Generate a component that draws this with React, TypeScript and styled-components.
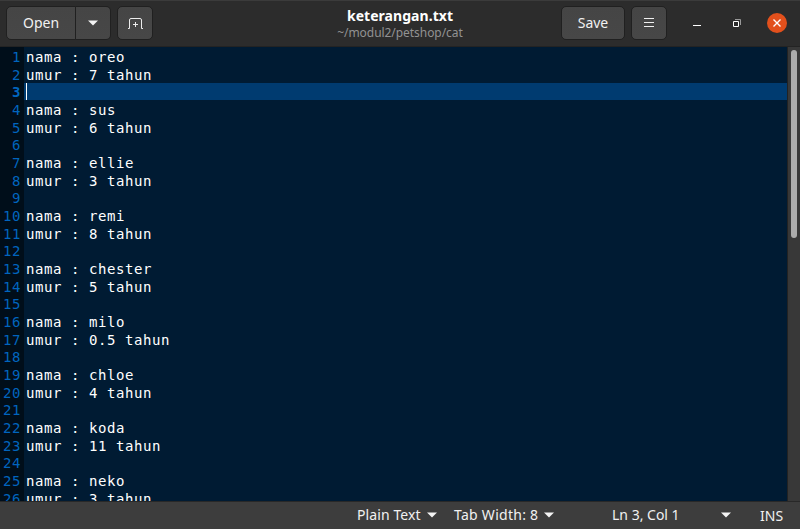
import React from 'react';
import styled, { createGlobalStyle } from 'styled-components';

const GlobalStyle = createGlobalStyle`
  * { box-sizing: border-box; }
  body { margin: 0; background: #2c2c2c; overflow: hidden; }
`;

const Window = styled.div`
  width: 800px;
  height: 529px;
  display: flex;
  flex-direction: column;
  overflow: hidden;
  font-family: 'Noto Sans', sans-serif;
  font-size: 14px;
  color: #f1f1f1;
`;

const HeaderBar = styled.header`
  height: 47px;
  flex: none;
  display: grid;
  grid-template-columns: 1fr 200px 1fr;
  background: #2c2c2c;
  border-top: 1px solid #3b3b3b;
  border-bottom: 1px solid #232323;
`;

const StartTools = styled.div`
  display: flex;
  gap: 6px;
  padding: 5px 0 0 6px;
`;

const EndTools = styled.div`
  display: flex;
  justify-content: flex-end;
  padding: 5px 13px 0 0;
`;

const ButtonGroup = styled.div`
  display: flex;
`;

const Button = styled.button<{ $width: number; $side?: 'left' | 'right'; $gap?: number }>`
  width: ${p => p.$width}px;
  height: 34px;
  margin: 0 0 0 ${p => p.$gap ?? 0}px;
  padding: 0;
  display: flex;
  align-items: center;
  justify-content: center;
  font: inherit;
  color: inherit;
  background: linear-gradient(#454545, #474747);
  border: 1px solid #202020;
  border-left-width: ${p => (p.$side === 'right' ? 0 : 1)}px;
  border-radius: ${p => (p.$side === 'left' ? '5px 0 0 5px' : p.$side === 'right' ? '0 5px 5px 0' : '5px')};
`;

const Label = styled.span<{ $spacing?: number; $indent?: number }>`
  margin-left: ${p => p.$indent ?? 0}px;
  letter-spacing: ${p => p.$spacing ?? 0}px;
  line-height: 20px;
  white-space: nowrap;
`;

const TitleBlock = styled.div`
  display: flex;
  flex-direction: column;
  align-items: center;
  padding-top: 5px;
`;

const Title = styled.span`
  font-size: 14px;
  font-weight: 700;
  line-height: 20px;
  letter-spacing: 0.05px;
  color: #fff;
`;

const Subtitle = styled.span`
  font-size: 12px;
  line-height: 13px;
  letter-spacing: -0.05px;
  color: #929292;
`;

const WindowControl = styled.button<{ $gap: number; $close?: boolean }>`
  width: 20px;
  height: 20px;
  margin: 7px 0 0 ${p => p.$gap}px;
  padding: 0;
  border: 0;
  border-radius: 50%;
  background: ${p => (p.$close ? '#e2501c' : 'transparent')};
  display: flex;
`;

const Editor = styled.main`
  height: 454px;
  flex: none;
  display: flex;
  overflow: hidden;
  background: #001b33;
`;

const Lines = styled.div`
  width: 787px;
  display: flex;
  flex-direction: column;
  font: 14px 'DejaVu Sans Mono', monospace;
  letter-spacing: 0.572px;
`;

const Line = styled.div<{ $short: boolean }>`
  height: ${p => (p.$short ? 17 : 18)}px;
  flex: none;
  display: flex;
  line-height: ${p => (p.$short ? 18 : 20)}px;
`;

const LineNumber = styled.span<{ $current: boolean }>`
  width: 24px;
  padding-right: 3px;
  text-align: right;
  background: #000e1a;
  color: #0065bf;
  font-weight: ${p => (p.$current ? 700 : 400)};
`;

const LineText = styled.span<{ $current: boolean }>`
  flex: 1;
  display: flex;
  padding-left: 2px;
  white-space: pre;
  color: #fff;
  background: ${p => (p.$current ? '#003b70' : '#001b33')};
`;

const Caret = styled.span`
  width: 1px;
  height: 17px;
  background: #fff;
`;

const ScrollTrack = styled.div`
  width: 13px;
  background: #383838;
  border-left: 1px solid #232323;
  padding: 3px 0 0 3px;
`;

const ScrollThumb = styled.div`
  width: 6px;
  height: 188px;
  border-radius: 3px;
  background: #acacac;
`;

const StatusBar = styled.footer`
  height: 28px;
  flex: none;
  display: flex;
  background: #3d3d3d;
  border-top: 1px solid #282828;
  padding: 3px 0 0 357px;
`;

const StatusItem = styled.div<{ $width: number; $spread?: boolean; $drop?: number }>`
  width: ${p => p.$width}px;
  height: 20px;
  margin-top: ${p => p.$drop ?? 0}px;
  display: flex;
  align-items: center;
  justify-content: ${p => (p.$spread ? 'space-between' : 'flex-start')};
  gap: 6px;
`;

const ArrowShape = styled.svg`
  flex: none;
`;

const Arrow = () => (
  <ArrowShape width="10" height="6" viewBox="0 0 10 6">
    <path d="M0 .5h10L5 5.5z" fill="#f4f4f4" />
  </ArrowShape>
);

const NewTabIcon = () => (
  <svg width="16" height="16" viewBox="0 0 16 16" fill="none" stroke="#ededed">
    <path d="M1 13.5H2.5V5Q2.5 3.5 4 3.5H13Q14.5 3.5 14.5 5V13.5H16M8.5 7V12M6 9.5H11" />
  </svg>
);

const MenuIcon = () => (
  <svg width="10" height="10" viewBox="0 0 10 10">
    <path d="M0 .5H10M0 4.5H10M0 8.5H10" stroke="#f0f0f0" />
  </svg>
);

const pets: [string, string][] = [
  ['oreo', '7'], ['sus', '6'], ['ellie', '3'], ['remi', '8'], ['chester', '5'],
  ['milo', '0.5'], ['chloe', '4'], ['koda', '11'], ['neko', '3'],
];
const lines = pets.flatMap(([name, age]) => [`nama : ${name}`, `umur : ${age} tahun`, '']).slice(0, 26);
const currentLine = 3;

export default function App() {
  return (
    <Window>
      <GlobalStyle />
      <HeaderBar>
        <StartTools>
          <ButtonGroup>
            <Button $width={70} $side="left"><Label>Open</Label></Button>
            <Button $width={35} $side="right"><Arrow /></Button>
          </ButtonGroup>
          <Button $width={36}><NewTabIcon /></Button>
        </StartTools>
        <TitleBlock>
          <Title>keterangan.txt</Title>
          <Subtitle>~/modul2/petshop/cat</Subtitle>
        </TitleBlock>
        <EndTools>
          <Button $width={64}><Label>Save</Label></Button>
          <Button $width={36} $gap={6}><MenuIcon /></Button>
          <WindowControl $gap={20}>
            <svg width="20" height="20"><path d="M6 12.5H14" stroke="#fff" /></svg>
          </WindowControl>
          <WindowControl $gap={20}>
            <svg width="20" height="20" fill="none">
              <path d="M8 6.5H13.5V12" stroke="#999" />
              <path d="M6.5 8.5H11.5V13.5H6.5Z" stroke="#fff" />
            </svg>
          </WindowControl>
          <WindowControl $gap={20} $close>
            <svg width="20" height="20"><path d="M6.5 6.5L13.5 13.5M13.5 6.5L6.5 13.5" stroke="#fff" strokeWidth="1.4" /></svg>
          </WindowControl>
        </EndTools>
      </HeaderBar>
      <Editor>
        <Lines>
          {lines.map((text, i) => (
            <Line key={i} $short={i % 3 === 2}>
              <LineNumber $current={i + 1 === currentLine}>{i + 1}</LineNumber>
              <LineText $current={i + 1 === currentLine}>
                {i + 1 === currentLine ? <Caret /> : text}
              </LineText>
            </Line>
          ))}
        </Lines>
        <ScrollTrack><ScrollThumb /></ScrollTrack>
      </Editor>
      <StatusBar>
        <StatusItem $width={97}><Label $spacing={0.1}>Plain Text</Label><Arrow /></StatusItem>
        <StatusItem $width={158}><Label $spacing={0.27}>Tab Width: 8</Label><Arrow /></StatusItem>
        <StatusItem $width={119} $spread><Label>Ln 3, Col 1</Label><Arrow /></StatusItem>
        <StatusItem $width={69} $drop={1}><Label $indent={29}>INS</Label></StatusItem>
      </StatusBar>
    </Window>
  );
}
